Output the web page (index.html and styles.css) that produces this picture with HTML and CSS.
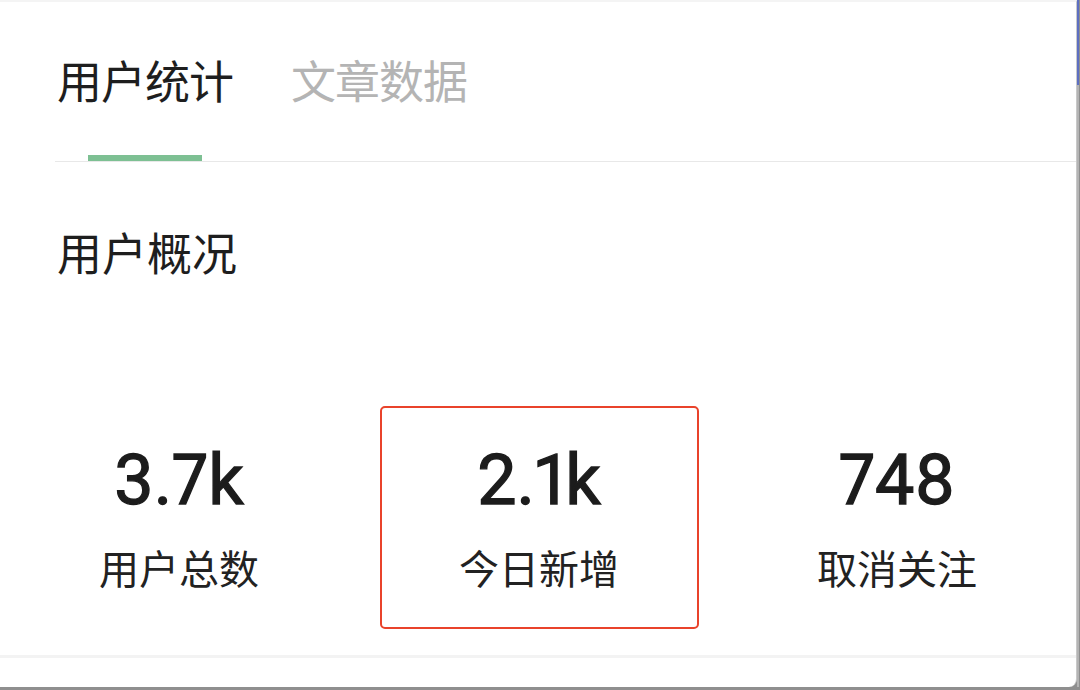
FILE: index.html
```html
<!DOCTYPE html>
<html lang="zh-CN">
<head>
<meta charset="utf-8">
<title>用户统计</title>
<link rel="stylesheet" href="styles.css">
</head>
<body>
<div class="frame">
  <div class="panel">
    <nav class="tabs">
      <div class="tab active">
        <span class="tab-text">用户统计</span>
        <span class="tab-bar"></span>
      </div>
      <div class="tab">
        <span class="tab-text">文章数据</span>
        <span class="tab-bar"></span>
      </div>
    </nav>
    <h2 class="section-title">用户概况</h2>
    <div class="stats">
      <div class="stat">
        <div class="stat-box">
          <div class="stat-num">3.7k</div>
          <div class="stat-label">用户总数</div>
        </div>
      </div>
      <div class="stat">
        <div class="stat-box highlight">
          <div class="stat-num">2.1k</div>
          <div class="stat-label">今日新增</div>
        </div>
      </div>
      <div class="stat">
        <div class="stat-box">
          <div class="stat-num">748</div>
          <div class="stat-label">取消关注</div>
        </div>
      </div>
    </div>
    <div class="bottom-divider"></div>
  </div>
  <div class="edge">
    <div class="edge-blue"></div>
    <div class="edge-gray"></div>
  </div>
</div>
</body>
</html>
```

FILE: styles.css
```css
html, body {
  margin: 0;
  padding: 0;
}
body {
  width: 1080px;
  height: 690px;
  overflow: hidden;
  background: #8f8f8f;
  font-family: "Noto Sans CJK SC", "Noto Sans", sans-serif;
  color: #1e1e1e;
}
.frame {
  display: flex;
  width: 1080px;
  height: 687px;
}
.panel {
  width: 1077px;
  height: 687px;
  background: #ffffff;
  border-top: 2px solid #f4f4f4;
  border-right: 1px solid #c9c9c9;
  border-bottom-right-radius: 8px;
  box-sizing: border-box;
  display: flex;
  flex-direction: column;
}
.edge {
  width: 2px;
  display: flex;
  flex-direction: column;
}
.edge-blue {
  height: 85px;
  background: #5d6fc2;
}
.edge-gray {
  flex: 1;
  background: #b4b4b4;
}
.tabs {
  display: flex;
  gap: 58px;
  margin-left: 55px;
  padding-left: 2px;
  padding-top: 55px;
  border-bottom: 1px solid #e8e8e8;
}
.tab {
  display: flex;
  flex-direction: column;
  align-items: center;
}
.tab-text {
  font-size: 45px;
  line-height: 45px;
  color: #b4b4b4;
  letter-spacing: -1px;
}
.tab.active .tab-text {
  color: #1e1e1e;
}
.tab-bar {
  width: 114px;
  height: 6px;
  margin-top: 53px;
  background: transparent;
}
.tab.active .tab-bar {
  background: #7dc093;
}
.section-title {
  margin: 67px 0 0 57px;
  font-size: 45px;
  line-height: 45px;
  font-weight: 400;
  color: #1e1e1e;
}
.stats {
  display: grid;
  grid-template-columns: 360px 360px 1fr;
  margin-top: 132px;
}
.stat {
  display: flex;
  justify-content: center;
}
.stat-box {
  width: 319px;
  box-sizing: border-box;
  border: 2px solid transparent;
  border-radius: 5px;
  padding: 37px 0 39px;
  display: flex;
  flex-direction: column;
  align-items: center;
  transform: translateX(-1px);
}
.stat-box.highlight {
  border-color: #e9432b;
}
.stat-num {
  font-family: Roboto, "Liberation Sans", sans-serif;
  font-weight: 400;
  -webkit-text-stroke: 1.3px #1c1c1c;
  font-feature-settings: "pnum" 1;
  font-size: 70px;
  line-height: 70px;
  color: #1c1c1c;
}
.stat-label {
  margin-top: 31px;
  font-size: 40px;
  line-height: 42px;
  color: #222;
}
.bottom-divider {
  margin-top: 26px;
  height: 3px;
  background: #f3f3f3;
}
```
